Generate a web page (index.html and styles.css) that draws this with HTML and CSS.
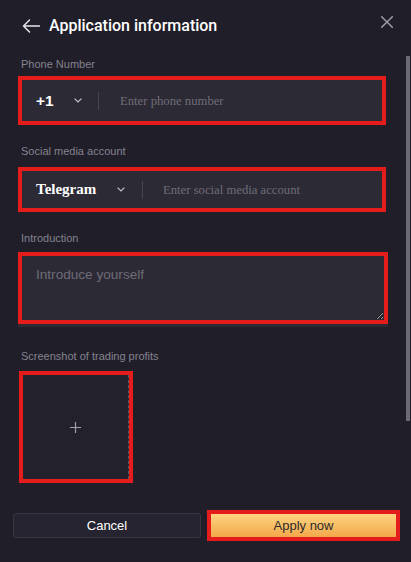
FILE: index.html
```html
<!DOCTYPE html>
<html lang="en">
<head>
<meta charset="utf-8">
<title>Application information</title>
<link rel="stylesheet" href="styles.css">
</head>
<body>
<div class="dialog">
  <header class="header">
    <svg class="back" width="18" height="14" viewBox="0 0 18 14" aria-hidden="true"><path d="M17.5 7H1.5M7.5 1L1.5 7l6 6" fill="none" stroke="#e6e6ea" stroke-width="1.5" stroke-linecap="round" stroke-linejoin="round"/></svg>
    <h1 class="title">Application information</h1>
    <svg class="close" width="12" height="12" viewBox="0 0 12 12" aria-hidden="true"><path d="M0.7 0.7l10.6 10.6M11.3 0.7L0.7 11.3" stroke="#a3a1aa" stroke-width="1.4" stroke-linecap="round"/></svg>
  </header>

  <form class="form">
    <label class="label label-phone">Phone Number</label>
    <div class="combo combo-phone">
      <div class="select select-phone">
        <span class="code">+1</span>
        <svg class="chev" width="8" height="5" viewBox="0 0 8 5"><path d="M0.6 0.6L4 4 7.4 0.6" fill="none" stroke="#c4c3cb" stroke-width="1.2"/></svg>
      </div>
      <span class="divider"></span>
      <input class="text-input input-phone" type="text" placeholder="Enter phone number">
    </div>

    <label class="label label-social">Social media account</label>
    <div class="combo combo-social">
      <div class="select select-social">
        <span class="network">Telegram</span>
        <svg class="chev" width="8" height="5" viewBox="0 0 8 5"><path d="M0.6 0.6L4 4 7.4 0.6" fill="none" stroke="#c4c3cb" stroke-width="1.2"/></svg>
      </div>
      <span class="divider"></span>
      <input class="text-input input-social" type="text" placeholder="Enter social media account">
    </div>

    <label class="label label-intro">Introduction</label>
    <textarea class="intro" placeholder="Introduce yourself"></textarea>

    <label class="label label-shot">Screenshot of trading profits</label>
    <div class="upload">
      <div class="upload-inner">
        <svg width="11" height="11" viewBox="0 0 11 11"><path d="M5.5 0v11M0 5.5h11" stroke="#a19fa8" stroke-width="1.2"/></svg>
      </div>
    </div>
  </form>

  <footer class="footer">
    <button class="btn btn-cancel" type="button">Cancel</button>
    <button class="btn btn-apply" type="button">Apply now</button>
  </footer>

  <div class="scroll-thumb"></div>
</div>
</body>
</html>
```

FILE: styles.css
```css
* { box-sizing: border-box; }

html, body {
  margin: 0;
  padding: 0;
  background: #201e28;
}

body {
  width: 411px;
  height: 562px;
  overflow: hidden;
  font-family: "Liberation Sans", Arial, sans-serif;
  color: #fff;
}

.dialog {
  position: relative;
  width: 411px;
  height: 562px;
  background: #201e28;
}

.header {
  display: flex;
  align-items: center;
  height: 51px;
  padding: 0 18px 0 22px;
}

.back { flex: none; }

.title {
  flex: 1;
  margin: 0 0 0 9px;
  font-family: Roboto, "Liberation Sans", sans-serif;
  font-weight: 500;
  font-size: 16px;
  color: #fff;
  letter-spacing: 0;
}

.close {
  flex: none;
  align-self: flex-start;
  margin-top: 16px;
}

.form {
  display: flex;
  flex-direction: column;
  align-items: flex-start;
  padding-left: 18px;
}

.label {
  display: block;
  font-size: 11px;
  line-height: 14px;
  color: #858390;
  padding-left: 3px;
}

.label-phone { margin-top: 6px; margin-bottom: 5px; }
.label-social { margin-top: 19px; margin-bottom: 9px; }
.label-intro { margin-top: 19px; margin-bottom: 7px; }
.label-shot { margin-top: 25px; margin-bottom: 8px; }

.combo {
  display: flex;
  align-items: center;
  width: 368px;
  border: 4px solid #e41c1c;
  background: #2c2a35;
}

.combo-phone { height: 49px; }
.combo-social { height: 45px; }

.select {
  display: flex;
  align-items: center;
  flex: none;
  padding-left: 14px;
}

.select-phone { width: 76px; padding-right: 16px; }
.select-social { width: 120px; padding-right: 17px; }

.chev { margin-left: auto; }

.code {
  font-weight: 700;
  font-size: 15.5px;
  color: #fff;
}

.network {
  font-family: "Liberation Serif", "Times New Roman", serif;
  font-weight: 700;
  font-size: 15px;
  color: #fff;
}

.divider {
  flex: none;
  width: 1px;
  height: 18px;
  background: #46444f;
}

.text-input {
  flex: 1;
  min-width: 0;
  border: 0;
  outline: 0;
  background: transparent;
  font-family: "Liberation Serif", "Times New Roman", serif;
  font-size: 12.7px;
  color: #fff;
  padding-top: 2px;
}

.input-phone { padding-left: 21px; }
.input-social { padding-left: 20px; }

.text-input::placeholder { color: #6f6d78; }

.intro {
  display: block;
  width: 370px;
  height: 72px;
  margin: 0;
  border: 4px solid #e41c1c;
  background: #2c2a35;
  box-shadow: 0 3px 0 #2c2a35;
  padding: 11px 14px 7px;
  font-family: "Liberation Sans", Arial, sans-serif;
  font-size: 13.6px;
  color: #fff;
  outline: 0;
}

.intro::placeholder { color: #6e6c77; }

.upload {
  width: 114px;
  height: 112px;
  margin-left: 1px;
  border: 4px solid #e41c1c;
  background: #201e28;
}

.upload-inner {
  display: flex;
  align-items: center;
  justify-content: center;
  height: 100%;
  border-right: 1px dashed #5a5862;
  background: #23212c;
}

.footer {
  display: flex;
  align-items: center;
  gap: 6px;
  margin-top: 27px;
  padding-left: 13px;
}

.btn {
  font-family: "Liberation Sans", Arial, sans-serif;
  font-size: 13px;
  cursor: pointer;
}

.btn-cancel {
  width: 188px;
  height: 25px;
  border: 1px solid #383641;
  border-radius: 3px;
  background: #262430;
  color: #fff;
}

.btn-apply {
  width: 193px;
  height: 31px;
  border: 4px solid #e41c1c;
  background: linear-gradient(#fdd481, #f2a84a);
  color: #2b2b2b;
}

.scroll-thumb {
  position: absolute;
  left: 406px;
  top: 56px;
  width: 4px;
  height: 365px;
  background: #6c6b72;
}
```
